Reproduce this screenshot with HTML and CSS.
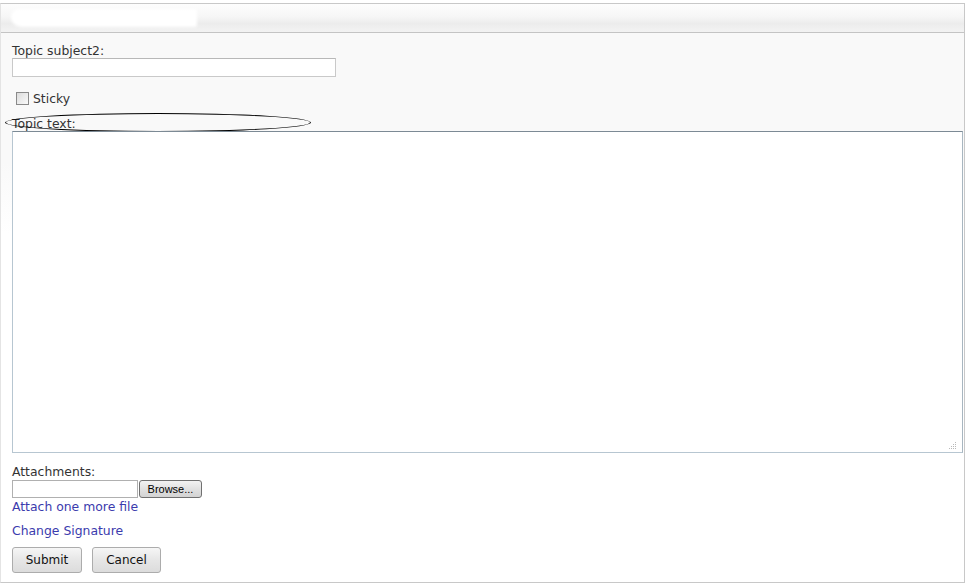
FILE: index.html
```html
<!DOCTYPE html>
<html>
<head>
<meta charset="utf-8">
<link rel="stylesheet" href="styles.css">
</head>
<body>
<div class="panel">
  <div class="panel-head"><span class="title-blur"></span></div>
  <form class="panel-body">
    <label class="lbl">Topic subject2:</label>
    <input class="subject" type="text">
    <label class="sticky"><input type="checkbox" class="cb"><span>Sticky</span></label>
    <div class="topic-label"><span class="ellipse"></span><span class="lbl">Topic text:</span></div>
    <div class="ta-wrap"><textarea class="ta"></textarea><span class="grip">
      <svg width="8" height="8" viewBox="0 0 8 8"><g fill="#b9b9b9"><rect x="6" y="0" width="1" height="1"/><rect x="4" y="2" width="1" height="1"/><rect x="6" y="2" width="1" height="1"/><rect x="2" y="4" width="1" height="1"/><rect x="4" y="4" width="1" height="1"/><rect x="6" y="4" width="1" height="1"/><rect x="0" y="6" width="1" height="1"/><rect x="2" y="6" width="1" height="1"/><rect x="4" y="6" width="1" height="1"/><rect x="6" y="6" width="1" height="1"/></g></svg>
    </span></div>
    <div class="lbl attach-lbl">Attachments:</div>
    <div class="file-row"><span class="file-box"></span><span class="browse">Browse...</span></div>
    <a class="link" href="#">Attach one more file</a>
    <a class="link sig" href="#">Change Signature</a>
    <div class="buttons"><button type="button" class="btn">Submit</button><button type="button" class="btn">Cancel</button></div>
  </form>
</div>
</body>
</html>
```
FILE: styles.css
```css
html, body { margin: 0; padding: 0; background: #fff; }
body { font-family: "DejaVu Sans", Verdana, sans-serif; font-size: 12.4px; color: #333; }
.panel {
  margin-top: 3px;
  width: 965px;
  height: 580px;
  border: 1px solid #c8c8c8;
  border-left-color: #e4e4e4;
  box-sizing: border-box;
  display: flex;
  flex-direction: column;
}
.panel-head {
  height: 28px;
  border-bottom: 1px solid #c4c4c4;
  background: linear-gradient(#fdfdfd 0%, #f6f6f6 45%, #ececec 70%, #f3f3f3 100%);
  position: relative;
  flex: none;
}
.title-blur {
  position: absolute;
  left: 10px; top: 5px;
  width: 186px; height: 18px;
  background: #ffffff;
  border-radius: 8px 2px 2px 10px;
  filter: blur(1.5px);
}
.panel-body {
  flex: 1;
  display: flex;
  flex-direction: column;
  align-items: flex-start;
  padding: 11px 0 0 11px;
  background: linear-gradient(#f9f9f9 0px, #f9f9f9 130px, #ffffff 200px);
}
.lbl { color: #333; line-height: 14px; }
.subject {
  margin: 0;
  width: 324px; height: 19px;
  box-sizing: border-box;
  border: 1px solid #c9c9c9;
  border-top-color: #b8b8b8;
  background: #fff;
}
.sticky {
  display: flex; align-items: center;
  margin: 14px 0 0 4px;
  height: 14px;
}
.cb {
  margin: 0 4px 0 0;
  width: 13px; height: 13px;
  appearance: none;
  border: 1px solid #8a8a8a;
  background: linear-gradient(135deg, #dcdcdc, #fafafa);
  box-sizing: border-box;
}
.topic-label {
  position: relative;
  margin-top: 11px;
  height: 14px;
}
.ellipse {
  position: absolute;
  left: -7px; top: -3px;
  width: 306px; height: 19px;
  border: 1.3px solid #000;
  border-radius: 50%;
  box-sizing: border-box;
}
.ta-wrap {
  position: relative;
  margin-top: 1px;
  width: 951px; height: 322px;
}
.ta {
  display: block;
  width: 100%; height: 100%;
  box-sizing: border-box;
  margin: 0;
  border: 1px solid #b7c6d1;
  border-top-color: #7c8a95;
  border-right-color: #a8b6c0;
  background: #fff;
  resize: none;
}
.grip { position: absolute; right: 6px; bottom: 3px; line-height: 0; }
.attach-lbl { margin-top: 12px; }
.file-row { display: flex; margin-top: 1px; height: 18px; }
.file-box {
  width: 126px; height: 18px; box-sizing: border-box;
  border: 1px solid #b0b0b0; background: #fff;
}
.browse {
  width: 63px; height: 18px; box-sizing: border-box;
  margin-left: 1px;
  border: 1px solid #707070; border-radius: 3px;
  background: linear-gradient(#f2f2f2, #e1e1e1 50%, #d3d3d3);
  font-family: "Liberation Sans", Arial, sans-serif;
  font-size: 11px; color: #000;
  display: flex; align-items: center; justify-content: center;
}
.link { color: #3b3bad; text-decoration: none; line-height: 14px; margin-top: 2px; }
.sig { margin-top: 10px; }
.buttons { display: flex; gap: 10px; margin-top: 9px; }
.btn {
  margin: 0;
  width: 70px; height: 26px;
  box-sizing: border-box;
  border: 1px solid #acacac; border-radius: 3px;
  background: linear-gradient(#f6f6f6, #e6e6e6 50%, #dcdcdc);
  font-family: "DejaVu Sans", Verdana, sans-serif;
  font-size: 12px; color: #111;
  padding: 0;
}
.btn + .btn { width: 69px; }
```
